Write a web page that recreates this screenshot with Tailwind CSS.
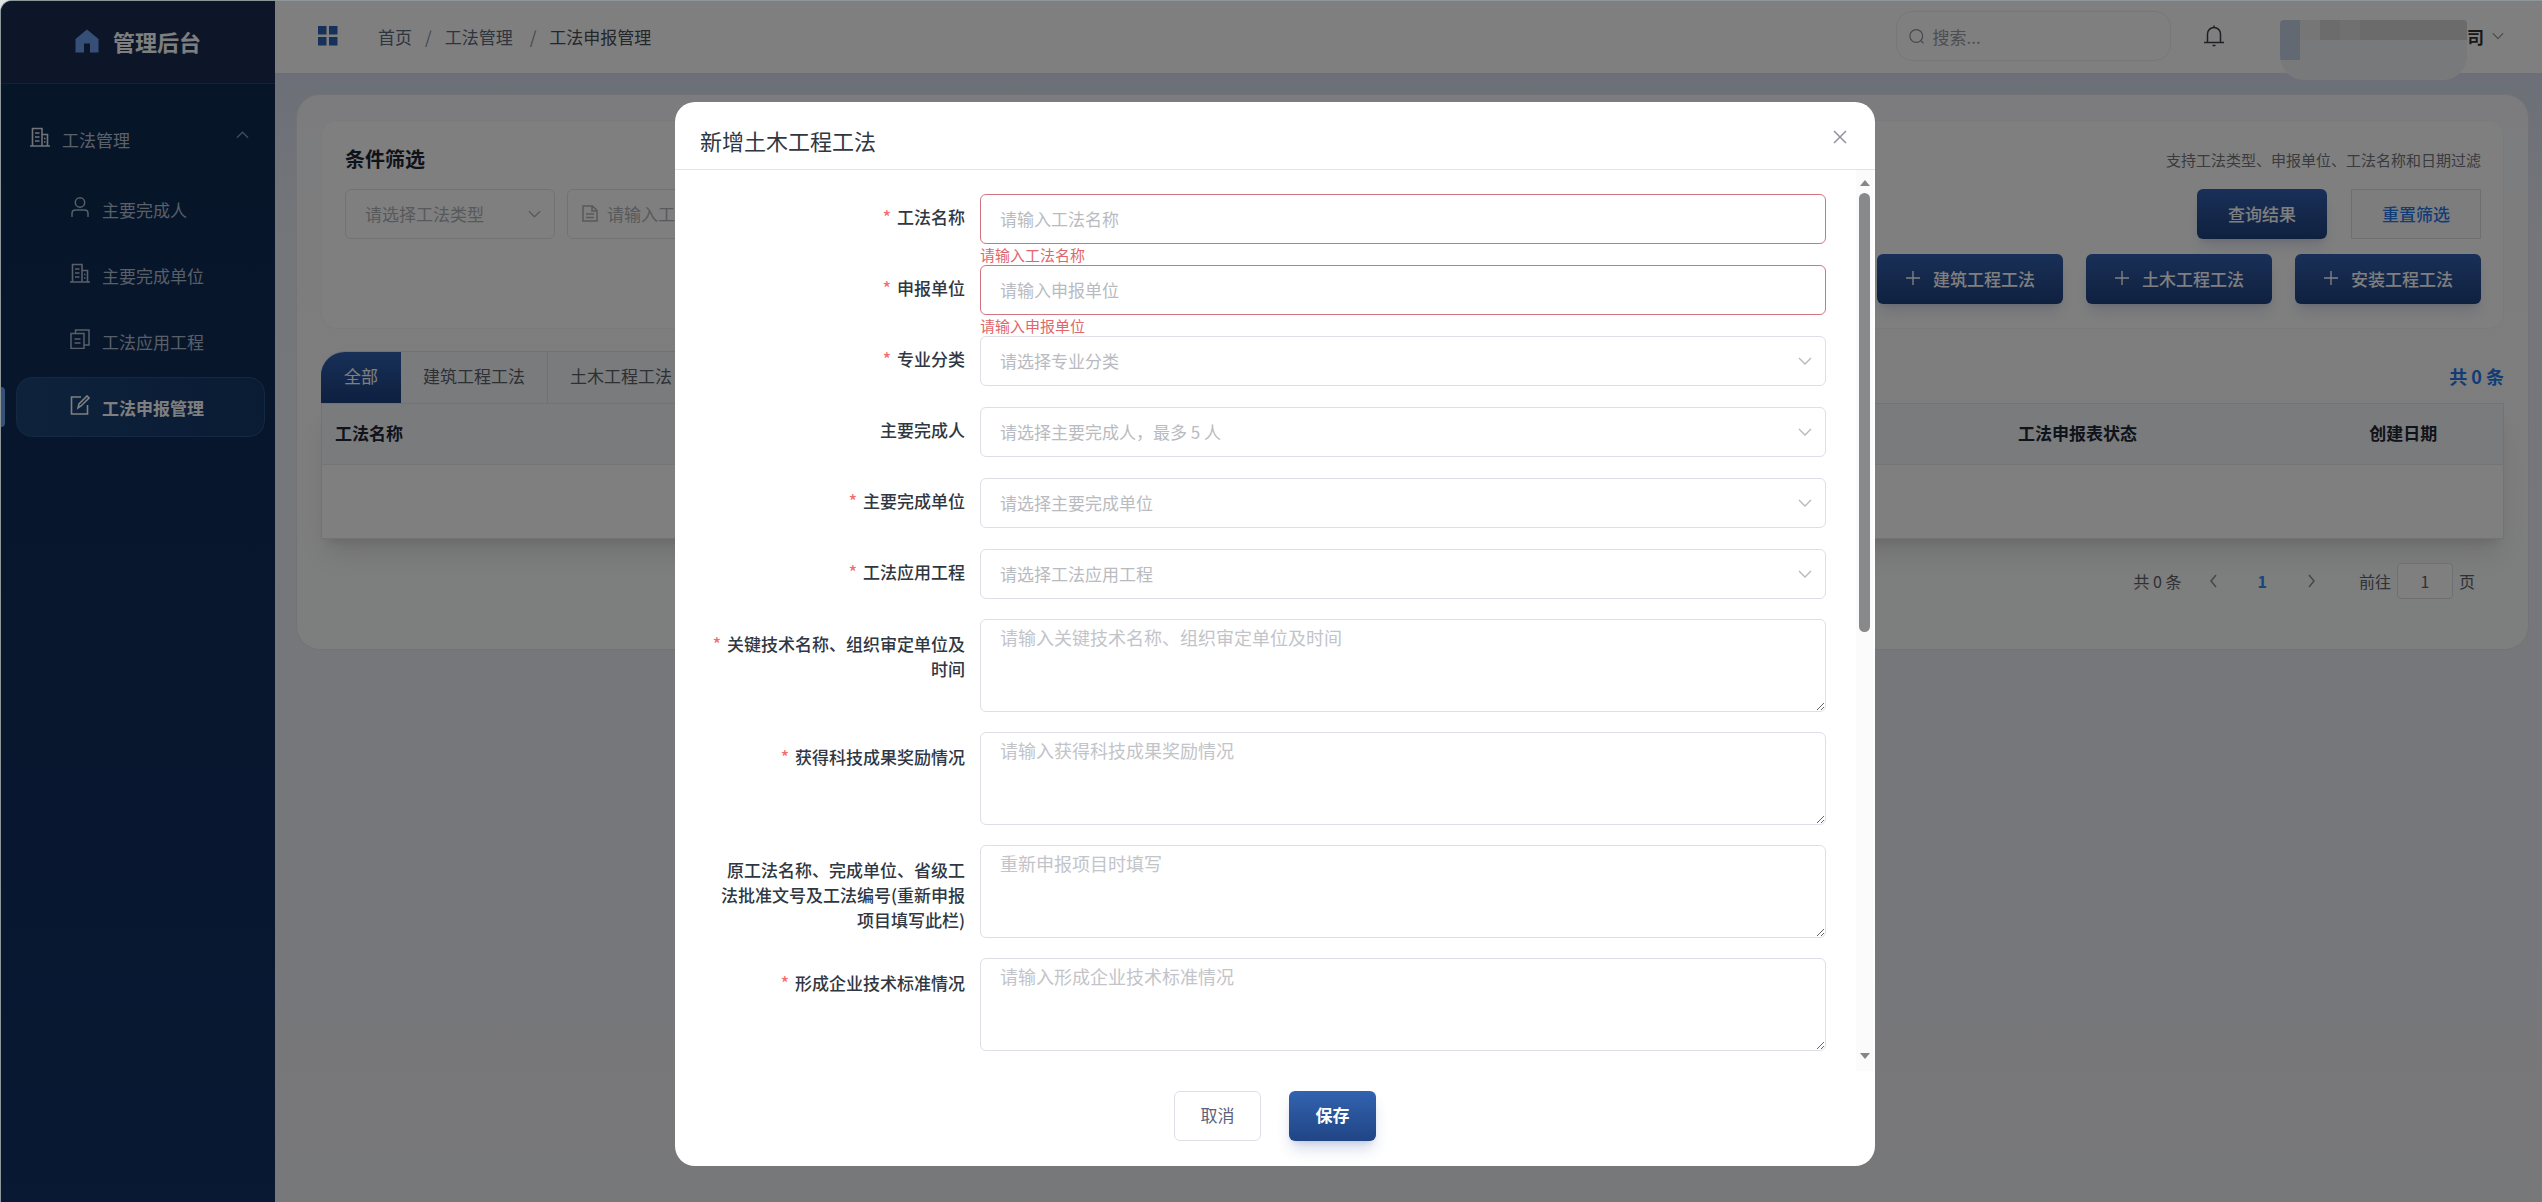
<!DOCTYPE html>
<html lang="zh-CN">
<head>
<meta charset="utf-8">
<title>管理后台 - 工法申报管理</title>
<script src="https://cdn.jsdelivr.net/npm/@tailwindcss/browser@4"></script>
</head>
<body class="bg-[#dfe3e3] font-['Noto_Sans_CJK_SC',sans-serif] text-[17px] leading-[25px] text-[#2f3742]">
<svg class="hidden">
  <symbol id="down" viewBox="0 0 14 8"><path d="M1 1l6 6 6-6" fill="none" stroke="currentColor" stroke-width="1.3"/></symbol>
  <symbol id="building" viewBox="0 0 20 20"><path d="M2.500 19V1.500H12V19M12 7.500h5.500V19M0 19h20M5 6h4.500M5 10h4.500M5 14h4.500M14 11.500h1.500M14 15h1.500" fill="none" stroke="currentColor" stroke-width="1.600"/></symbol>
  <symbol id="plus" viewBox="0 0 16 16"><path d="M8 1v14M1 8h14" fill="none" stroke="currentColor" stroke-width="1.400"/></symbol>
</svg>
<div class="relative flex min-h-screen overflow-hidden rounded-tl-xl border-t border-l border-[#8d9698]">

  <aside class="flex w-[274px] shrink-0 flex-col bg-linear-to-b from-[#0e2a50] to-[#123166]">
    <div class="flex h-[83px] items-center justify-center gap-[14px] border-b border-[#2a4066] bg-[#182c50] pb-[2px]">
      <svg class="h-6 w-6 text-[#6a9eee]" viewBox="0 0 24 24" fill="currentColor"><path d="M12 0.500L23.500 10v13.500H15V14.500H9v9H0.500V10z"/></svg>
      <span class="text-[22px] leading-8 font-bold text-white">管理后台</span>
    </div>
    <nav class="flex flex-col pt-[25px]">
      <button class="flex h-[60px] items-center gap-3 pr-[26px] pl-[29px] text-[#b6c3d6]">
        <svg class="mb-1 h-5 w-5 text-[#e2e8f2]"><use href="#building"/></svg>
        <span class="flex-1 text-left">工法管理</span>
        <svg class="mb-2 h-2 w-[13px] rotate-180 text-[#8a9ab4]"><use href="#down"/></svg>
      </button>
      <ul class="flex flex-col gap-[6px] pt-[10px] text-[#b0bed2]">
        <li class="mr-[10px] ml-[15px]"><a href="#" class="flex h-[60px] items-center gap-3 pl-[54px]">
          <svg class="mb-1 h-5 w-5" viewBox="0 0 20 20" fill="none" stroke="currentColor" stroke-width="1.500"><circle cx="10" cy="5.500" r="4.700"/><path d="M2 20v-3.500c0-2 1.300-3.500 3.500-3.500h9c2.200 0 3.500 1.500 3.500 3.500V20"/></svg>主要完成人</a></li>
        <li class="mr-[10px] ml-[15px]"><a href="#" class="flex h-[60px] items-center gap-3 pl-[54px]">
          <svg class="mb-1 h-5 w-5"><use href="#building"/></svg>主要完成单位</a></li>
        <li class="mr-[10px] ml-[15px]"><a href="#" class="flex h-[60px] items-center gap-3 pl-[54px]">
          <svg class="mb-1 h-5 w-5" viewBox="0 0 20 20" fill="none" stroke="currentColor" stroke-width="1.500"><path d="M1 4.500h13V19.500H1zM5.500 4V1H19v15h-4.500M4.500 10h6M4.500 14h6"/></svg>工法应用工程</a></li>
        <li class="relative mr-[10px] ml-[15px]">
          <span class="absolute top-[10px] -left-[15px] h-10 w-1 rounded-r bg-[#6ea3ee]"></span>
          <a href="#" class="flex h-[60px] items-center gap-3 rounded-2xl border border-[#2b5184] bg-linear-to-r from-[#1d4579] to-[#153768] pl-[53px] font-bold text-white">
          <svg class="mb-1 h-5 w-5" viewBox="0 0 20 20" fill="none" stroke="currentColor" stroke-width="1.600"><path d="M11 2H1.500v17h16V10M8 13l1-4 8-8 2 2-8 8z"/></svg>工法申报管理</a></li>
      </ul>
    </nav>
  </aside>

  <div class="flex min-w-0 flex-1 flex-col">
    <header class="relative z-10 flex h-[72px] items-center bg-white pr-[38px] pb-[2px] pl-[43px]">
      <svg class="h-5 w-5 text-[#2c62b4]" viewBox="0 0 20 20" fill="currentColor"><path d="M0 0h8.500v8.500H0zM11 0h8.500v8.500H11zM0 11h8.500v8.500H0zM11 11h8.500v8.500H11z"/></svg>
      <nav class="flex flex-1 gap-[13px] pl-10 text-[#5c6a80]">
        <a href="#">首页</a><span class="text-[#8a909c]">/</span><a href="#">工法管理</a><span class="pl-1 text-[#8a909c]">/</span><span class="text-[#4a4d55]">工法申报管理</span>
      </nav>
      <label class="flex h-[50px] w-[275px] items-center gap-2 rounded-2xl border border-[#eceef2] pl-3 text-[#8e9096]">
        <svg class="h-[17px] w-[17px]" viewBox="0 0 17 17" fill="none" stroke="currentColor" stroke-width="1.300"><circle cx="8" cy="8" r="7"/><path d="M13 13l3 3"/></svg>
        <input type="text" placeholder="搜索..." aria-label="搜索" class="w-full bg-transparent outline-none placeholder:text-[#9a9ca2]">
      </label>
      <button class="ml-8 text-[#3c3f46]" aria-label="通知">
        <svg class="h-[22px] w-[22px]" viewBox="0 0 22 22" fill="none" stroke="currentColor" stroke-width="1.500"><path d="M11 0.500v2M4.500 17V9a6.500 6.500 0 0 1 13 0v8M1 17.500h20M9.500 20.500h3"/></svg>
      </button>
      <div class="mt-[19px] ml-[55px] h-[60px] w-[187px] self-start overflow-hidden rounded-t rounded-b-3xl bg-[#f1f3f5]" aria-hidden="true">
        <div class="flex h-10">
          <div class="w-5 bg-[#c6d3e4]"></div>
          <div class="flex-1 bg-[#f1f2f5]">
            <div class="flex h-5"><div class="w-5 bg-[#ececee]"></div><div class="w-5 bg-[#d8d8da]"></div><div class="w-5 bg-[#e0e0e2]"></div><div class="flex-1 bg-[#d6d6d8]"></div></div>
          </div>
        </div>
      </div>
      <button class="flex items-center gap-2 font-bold text-[#303133]">司<svg class="h-2 w-3 text-[#85888f]"><use href="#down"/></svg></button>
    </header>

    <main class="flex-1 bg-linear-to-b from-[#d8dfee] via-[#e9edf4] via-15% to-[#eff0f4] px-[21px] pt-[21px] pr-[13px]">
      <section class="flex h-[556px] flex-col rounded-3xl border border-[#e3e7ee] bg-white/80 px-6 pt-[25px]">
        <form class="rounded-2xl border border-[#f4f5f8] bg-white pt-[23px] pr-[22px] pb-6 pl-[23px]">
          <div class="flex items-center justify-between">
            <h2 class="text-[20px] leading-[30px] font-bold text-[#1d2635]">条件筛选</h2>
            <p class="text-[15px] text-[#73767d]">支持工法类型、申报单位、工法名称和日期过滤</p>
          </div>
          <div class="flex items-start gap-3 pt-[15px]">
            <div class="relative w-[210px]">
              <select aria-label="工法类型" class="h-[50px] w-full appearance-none rounded-md border border-[#e2e5ea] bg-white px-[19px] pb-[2px] text-[#b0b2b7]"><option>请选择工法类型</option></select>
              <svg class="pointer-events-none absolute top-[21px] right-[14px] h-2 w-[13px] text-[#b0b2b7]"><use href="#down"/></svg>
            </div>
            <label class="flex h-[50px] w-[260px] items-center gap-[9px] rounded-md border border-[#e2e5ea] bg-white pb-[2px] pl-[14px] text-[#b0b2b7]">
              <svg class="h-[17px] w-4 shrink-0" viewBox="0 0 16 17" fill="none" stroke="currentColor" stroke-width="1.500"><path d="M1 1h9.500L15 5.500V16H1zM10 1v5h5M4 9h8M4 12.500h8"/></svg>
              <input type="text" placeholder="请输入工法名称" aria-label="工法名称筛选" class="w-full bg-transparent outline-none placeholder:text-[#b0b2b7]">
            </label>
            <div class="flex flex-1 flex-col items-end gap-[15px] font-medium">
              <div class="flex gap-6">
                <button type="button" class="h-[50px] w-[130px] rounded-md bg-linear-to-b from-[#3260b0] to-[#20427f] pb-[2px] text-white shadow-lg shadow-blue-900/15">查询结果</button>
                <button type="button" class="h-[50px] w-[130px] border border-[#dcdfe6] bg-[#fbfbfd] pb-[2px] text-[#2478ea]">重置筛选</button>
              </div>
              <div class="flex gap-[23px] text-white">
                <button type="button" class="flex h-[50px] w-[186px] items-center justify-center gap-3 rounded-md bg-linear-to-b from-[#3260b0] to-[#20427f] pb-[2px] shadow-lg shadow-blue-900/15"><svg class="h-4 w-4"><use href="#plus"/></svg>建筑工程工法</button>
                <button type="button" class="flex h-[50px] w-[186px] items-center justify-center gap-3 rounded-md bg-linear-to-b from-[#3260b0] to-[#20427f] pb-[2px] shadow-lg shadow-blue-900/15"><svg class="h-4 w-4"><use href="#plus"/></svg>土木工程工法</button>
                <button type="button" class="flex h-[50px] w-[186px] items-center justify-center gap-3 rounded-md bg-linear-to-b from-[#3260b0] to-[#20427f] pb-[2px] shadow-lg shadow-blue-900/15"><svg class="h-4 w-4"><use href="#plus"/></svg>安装工程工法</button>
              </div>
            </div>
          </div>
        </form>

        <div class="flex items-center justify-between pt-[22px]">
          <div class="flex h-[52px] overflow-hidden rounded-tl-3xl border-t border-[#dfe3ea] bg-[#f5f7fa] text-[#5c6069]">
            <button class="bg-linear-to-b from-[#3060b0] to-[#1d4080] px-[23px] pb-1 text-white">全部</button>
            <button class="border-r border-[#dfe3ea] px-[22px] pb-1">建筑工程工法</button>
            <button class="border-r border-[#dfe3ea] px-[22px] pb-1">土木工程工法</button>
            <button class="px-[22px] pb-1">安装工程工法</button>
          </div>
          <p class="pb-[2px] text-lg font-bold text-[#2478ea]">共 0 条</p>
        </div>
        <table class="w-full border border-[#e4e7ed] bg-white text-[#202634] shadow-xl shadow-black/10">
          <thead>
            <tr class="h-[61px] border-b border-[#e8ebf0] bg-[#f5f7fb]">
              <th class="pb-1 pl-[13px] text-left">工法名称</th>
              <th class="w-[452px] pb-1 text-center">工法申报表状态</th>
              <th class="w-[200px] pb-1 text-center">创建日期</th>
            </tr>
          </thead>
          <tbody><tr class="h-[74px]"><td colspan="3"></td></tr></tbody>
        </table>
        <div class="flex items-center justify-end pt-6 pr-[29px] text-base text-[#5f626a]">
          <span>共 0 条</span>
          <button class="ml-[26px] text-[#8a8d94]" aria-label="上一页"><svg class="h-[14px] w-3" viewBox="0 0 12 14" fill="none" stroke="currentColor" stroke-width="1.500"><path d="M8 1L3 7l5 6"/></svg></button>
          <button class="ml-[38px] font-bold text-[#2f8cf0]">1</button>
          <button class="ml-[38px] text-[#8a8d94]" aria-label="下一页"><svg class="h-[14px] w-3" viewBox="0 0 12 14" fill="none" stroke="currentColor" stroke-width="1.500"><path d="M4 1l5 6-5 6"/></svg></button>
          <label class="ml-[42px] flex items-center gap-[6px]">前往<input type="text" value="1" class="h-9 w-[56px] rounded border border-[#dcdfe6] bg-white text-center">页</label>
        </div>
      </section>
    </main>
  </div>

  <div class="absolute inset-0 z-20 flex items-start justify-center bg-black/50 pt-[101px] pl-[7px]">
    <div role="dialog" aria-labelledby="dialog-title" class="w-[1200px] rounded-[20px] bg-white">
      <div class="flex h-[68px] items-start justify-between border-b border-[#e1e3e8] pt-[22px] pr-7 pl-[25px]">
        <h1 id="dialog-title" class="text-[22px] leading-8">新增土木工程工法</h1>
        <button class="mt-[6px] text-[#909399]" aria-label="关闭"><svg class="h-[14px] w-[14px]" viewBox="0 0 14 14" fill="none" stroke="currentColor" stroke-width="1.500"><path d="M1 1l12 12M13 1L1 13"/></svg></button>
      </div>
      <div class="flex">
        <form class="flex flex-1 flex-col gap-5 pt-6 pb-5 pl-[26px]">
          <div class="flex flex-col gap-[21px]">
            <div class="flex">
              <label for="name" class="w-[279px] shrink-0 pt-[10px] pr-[15px] text-right font-medium"><span class="mr-[6px] text-[#f56c6c]">*</span>工法名称</label>
              <div class="relative flex-1">
                <input id="name" type="text" placeholder="请输入工法名称" class="block h-[50px] w-full rounded-md border border-[#d0757f] px-[19px] pb-[2px] placeholder:text-[#b9bbc0]">
                <p class="absolute top-full left-0 text-[15px] leading-[22px] text-[#e0666c]">请输入工法名称</p>
              </div>
            </div>
            <div class="flex">
              <label for="unit" class="w-[279px] shrink-0 pt-[10px] pr-[15px] text-right font-medium"><span class="mr-[6px] text-[#f56c6c]">*</span>申报单位</label>
              <div class="relative flex-1">
                <input id="unit" type="text" placeholder="请输入申报单位" class="block h-[50px] w-full rounded-md border border-[#d0757f] px-[19px] pb-[2px] placeholder:text-[#b9bbc0]">
                <p class="absolute top-full left-0 text-[15px] leading-[22px] text-[#e0666c]">请输入申报单位</p>
              </div>
            </div>
            <div class="flex">
              <label for="major" class="w-[279px] shrink-0 pt-[10px] pr-[15px] text-right font-medium"><span class="mr-[6px] text-[#f56c6c]">*</span>专业分类</label>
              <div class="relative flex-1">
                <select id="major" class="block h-[50px] w-full appearance-none rounded-md border border-[#dcdfe6] px-[19px] pb-[2px] text-[#b9bbc0]"><option>请选择专业分类</option></select>
                <svg class="pointer-events-none absolute top-[21px] right-[14px] h-2 w-[14px] text-[#b4b7bd]"><use href="#down"/></svg>
              </div>
            </div>
            <div class="flex">
              <label for="person" class="w-[279px] shrink-0 pt-[10px] pr-[15px] text-right font-medium">主要完成人</label>
              <div class="relative flex-1">
                <select id="person" class="block h-[50px] w-full appearance-none rounded-md border border-[#dcdfe6] px-[19px] pb-[2px] text-[#b9bbc0]"><option>请选择主要完成人，最多 5 人</option></select>
                <svg class="pointer-events-none absolute top-[21px] right-[14px] h-2 w-[14px] text-[#b4b7bd]"><use href="#down"/></svg>
              </div>
            </div>
            <div class="flex">
              <label for="org" class="w-[279px] shrink-0 pt-[10px] pr-[15px] text-right font-medium"><span class="mr-[6px] text-[#f56c6c]">*</span>主要完成单位</label>
              <div class="relative flex-1">
                <select id="org" class="block h-[50px] w-full appearance-none rounded-md border border-[#dcdfe6] px-[19px] pb-[2px] text-[#b9bbc0]"><option>请选择主要完成单位</option></select>
                <svg class="pointer-events-none absolute top-[21px] right-[14px] h-2 w-[14px] text-[#b4b7bd]"><use href="#down"/></svg>
              </div>
            </div>
            <div class="flex">
              <label for="project" class="w-[279px] shrink-0 pt-[10px] pr-[15px] text-right font-medium"><span class="mr-[6px] text-[#f56c6c]">*</span>工法应用工程</label>
              <div class="relative flex-1">
                <select id="project" class="block h-[50px] w-full appearance-none rounded-md border border-[#dcdfe6] px-[19px] pb-[2px] text-[#b9bbc0]"><option>请选择工法应用工程</option></select>
                <svg class="pointer-events-none absolute top-[21px] right-[14px] h-2 w-[14px] text-[#b4b7bd]"><use href="#down"/></svg>
              </div>
            </div>
          </div>
          <div class="flex">
            <label for="tech" class="w-[279px] shrink-0 pt-3 pr-[15px] text-right font-medium"><span class="mr-[6px] text-[#f56c6c]">*</span>关键技术名称、组织审定单位及<br>时间</label>
            <textarea id="tech" placeholder="请输入关键技术名称、组织审定单位及时间" class="block h-[93px] flex-1 resize rounded-md border border-[#dcdfe6] px-[19px] py-1 text-lg leading-[27px] placeholder:text-[#c2c4c9]"></textarea>
          </div>
          <div class="flex">
            <label for="award" class="w-[279px] shrink-0 pt-3 pr-[15px] text-right font-medium"><span class="mr-[6px] text-[#f56c6c]">*</span>获得科技成果奖励情况</label>
            <textarea id="award" placeholder="请输入获得科技成果奖励情况" class="block h-[93px] flex-1 resize rounded-md border border-[#dcdfe6] px-[19px] py-1 text-lg leading-[27px] placeholder:text-[#c2c4c9]"></textarea>
          </div>
          <div class="flex">
            <label for="origin" class="w-[279px] shrink-0 pt-3 pr-[15px] text-right font-medium">原工法名称、完成单位、省级工<br>法批准文号及工法编号(重新申报<br>项目填写此栏)</label>
            <textarea id="origin" placeholder="重新申报项目时填写" class="block h-[93px] flex-1 resize rounded-md border border-[#dcdfe6] px-[19px] py-1 text-lg leading-[27px] placeholder:text-[#c2c4c9]"></textarea>
          </div>
          <div class="flex">
            <label for="standard" class="w-[279px] shrink-0 pt-3 pr-[15px] text-right font-medium"><span class="mr-[6px] text-[#f56c6c]">*</span>形成企业技术标准情况</label>
            <textarea id="standard" placeholder="请输入形成企业技术标准情况" class="block h-[93px] flex-1 resize rounded-md border border-[#dcdfe6] px-[19px] py-1 text-lg leading-[27px] placeholder:text-[#c2c4c9]"></textarea>
          </div>
        </form>
        <div class="mr-[2px] ml-[30px] flex w-[17px] flex-col items-center bg-[#fbfbfb] pt-[10px] pb-3 text-[#85878a]" aria-hidden="true">
          <svg class="h-[6px] w-[10px]" viewBox="0 0 10 6" fill="currentColor"><path d="M5 0l5 6H0z"/></svg>
          <div class="mt-[7px] h-[439px] w-[11px] rounded-full bg-[#88898b]"></div>
          <svg class="mt-auto h-[6px] w-[10px]" viewBox="0 0 10 6" fill="currentColor"><path d="M5 6l5-6H0z"/></svg>
        </div>
      </div>
      <div class="flex justify-center gap-7 pt-5 pb-[25px]">
        <button class="h-[50px] w-[87px] rounded-md border border-[#dcdfe6] bg-white pb-[3px] text-[#5a6178]">取消</button>
        <button class="h-[50px] w-[87px] rounded-md bg-linear-to-b from-[#3263b0] to-[#214585] pb-[3px] font-bold text-white shadow-lg shadow-blue-900/20">保存</button>
      </div>
    </div>
  </div>
</div>
</body>
</html>
